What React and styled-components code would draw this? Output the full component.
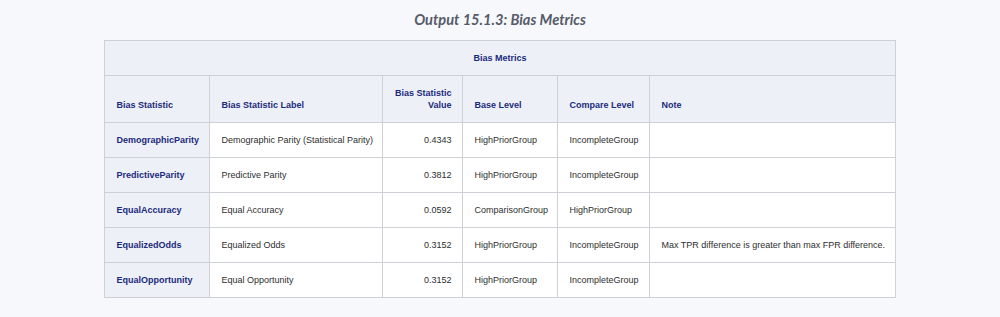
import React from 'react'
import styled, {createGlobalStyle} from 'styled-components'

const GlobalStyle = createGlobalStyle`
  html, body {
    margin: 0;
    background: #f7f8fc;
  }
`;

const Page = styled.div`
  display: flex;
  flex-direction: column;
  align-items: center;
  padding-top: 10px;
  font-family: "Liberation Sans", Arial, sans-serif;
`;

const Title = styled.h2`
  margin: 0 0 10px;
  font-family: Lato, "Open Sans", sans-serif;
  font-style: italic;
  font-weight: 700;
  font-size: 14.6px;
  line-height: 20px;
  color: #555b69;
`;

const Table = styled.table`
  width: 790px;
  table-layout: fixed;
  border-collapse: collapse;
  border: 1px solid #c3c5c9;
  font-size: 9px;
  white-space: nowrap;
`;

const Cell = styled.td`
  border: 1px solid #cdd0d4;
  padding: 0 11px;
  height: 34px;
  color: #2e2e2e;
  background: #fff;
  text-align: ${p => (p.$num ? 'right' : 'left')};
  vertical-align: middle;
`;

const RowHead = styled(Cell).attrs({as: 'th'})`
  background: #edf0f7;
  color: #1c2a7c;
  font-weight: 700;
`;

const ColHead = styled.th`
  border: 1px solid #cdd0d4;
  padding: 0 11px 11px;
  height: 35px;
  background: #edf0f7;
  color: #1c2a7c;
  font-weight: 700;
  line-height: 12px;
  text-align: ${p => (p.$num ? 'right' : 'left')};
  vertical-align: bottom;
`;

const Caption = styled.th`
  border: 1px solid #cdd0d4;
  padding: 0;
  height: 34px;
  background: #edf0f7;
  color: #1c2a7c;
  font-weight: 700;
  text-align: center;
`;

const widths = [105, 173, 80, 95, 92, 245];

const rows = [
  ['DemographicParity', 'Demographic Parity (Statistical Parity)', '0.4343', 'HighPriorGroup', 'IncompleteGroup', ''],
  ['PredictiveParity', 'Predictive Parity', '0.3812', 'HighPriorGroup', 'IncompleteGroup', ''],
  ['EqualAccuracy', 'Equal Accuracy', '0.0592', 'ComparisonGroup', 'HighPriorGroup', ''],
  ['EqualizedOdds', 'Equalized Odds', '0.3152', 'HighPriorGroup', 'IncompleteGroup', 'Max TPR difference is greater than max FPR difference.'],
  ['EqualOpportunity', 'Equal Opportunity', '0.3152', 'HighPriorGroup', 'IncompleteGroup', ''],
];

export default function App() {
  return (
    <Page>
      <GlobalStyle/>
      <Title>Output 15.1.3: Bias Metrics</Title>
      <Table>
        <colgroup>
          {widths.map((w, i) => <col key={i} style={{width: w}}/>)}
        </colgroup>
        <thead>
          <tr><Caption colSpan={6}>Bias Metrics</Caption></tr>
          <tr>
            <ColHead>Bias Statistic</ColHead>
            <ColHead>Bias Statistic Label</ColHead>
            <ColHead $num>Bias Statistic<br/>Value</ColHead>
            <ColHead>Base Level</ColHead>
            <ColHead>Compare Level</ColHead>
            <ColHead>Note</ColHead>
          </tr>
        </thead>
        <tbody>
          {rows.map(r => (
            <tr key={r[0]}>
              <RowHead>{r[0]}</RowHead>
              <Cell>{r[1]}</Cell>
              <Cell $num>{r[2]}</Cell>
              <Cell>{r[3]}</Cell>
              <Cell>{r[4]}</Cell>
              <Cell>{r[5]}</Cell>
            </tr>
          ))}
        </tbody>
      </Table>
    </Page>
  );
}
